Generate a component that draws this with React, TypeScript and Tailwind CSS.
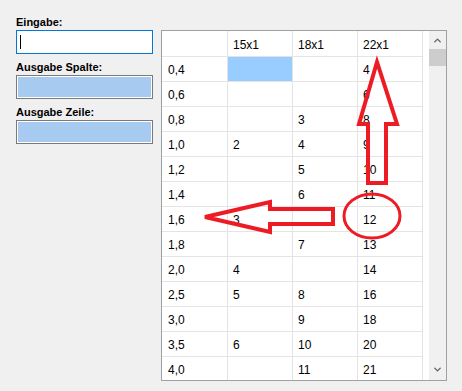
import { ChevronUp, ChevronDown } from "lucide-react";

const cols = ["15x1", "18x1", "22x1"];

const rows: [string, string, string, string][] = [
  ["0,4", "", "", "4"],
  ["0,6", "", "", "6"],
  ["0,8", "", "3", "8"],
  ["1,0", "2", "4", "9"],
  ["1,2", "", "5", "10"],
  ["1,4", "", "6", "11"],
  ["1,6", "3", "", "12"],
  ["1,8", "", "7", "13"],
  ["2,0", "4", "", "14"],
  ["2,5", "5", "8", "16"],
  ["3,0", "", "9", "18"],
  ["3,5", "6", "10", "20"],
  ["4,0", "", "11", "21"],
];

const Label = ({ text }: { text: string }) => (
  <div className="h-[15px] text-[11px] leading-[15px] font-bold text-black">
    {text}
  </div>
);

const OutputBox = () => (
  <div className="h-[24px] w-[137px] border border-[#7a7a7a] p-px bg-white">
    <div className="h-full w-full bg-[#a6caf0]" />
  </div>
);

export default function App() {
  return (
    <div
      className="relative w-[462px] h-[391px] bg-[#f0f0f0] overflow-hidden"
      style={{ fontFamily: '"Liberation Sans", Arial, sans-serif' }}
    >
      <div className="flex items-start">
        {/* form fields */}
        <div className="ml-[16px] mt-[15px] w-[137px] flex flex-col">
          <Label text="Eingabe:" />
          <div className="h-[24px] w-[137px] border border-[#0078d7] bg-white flex items-center pl-[3px]">
            <div className="w-px h-[14px] bg-black" />
          </div>
          <div className="mt-[6px]">
            <Label text="Ausgabe Spalte:" />
          </div>
          <OutputBox />
          <div className="mt-[6px]">
            <Label text="Ausgabe Zeile:" />
          </div>
          <OutputBox />
        </div>

        {/* grid */}
        <div className="ml-[8px] mt-[30px] w-[286px] h-[351px] border border-[#a0a0a0] bg-white flex overflow-hidden">
          <div className="w-[261px] flex flex-col text-[12px] text-black">
            <div className="flex h-[26px] shrink-0">
              <div className="w-[66px] border-r border-b border-[#e4e4e4]" />
              {cols.map((c) => (
                <div
                  key={c}
                  className="w-[65px] border-r border-b border-[#e4e4e4] flex items-center pl-[5px] pt-[2px]"
                >
                  {c}
                </div>
              ))}
            </div>
            {rows.map((r, i) => (
              <div key={r[0]} className="flex h-[25px] shrink-0">
                {r.map((v, j) => (
                  <div
                    key={j}
                    className={
                      (j === 0 ? "w-[66px] pl-[6px] " : "w-[65px] pl-[5px] ") +
                      "border-r border-b border-[#e4e4e4] flex items-center pt-px " +
                      (i === 0 && j === 1 ? "bg-[#99ccff]" : "")
                    }
                  >
                    {v}
                  </div>
                ))}
              </div>
            ))}
          </div>
          <div className="w-[6px]" />
          <div className="w-[17px] bg-[#f0f0f0] flex flex-col items-center">
            <div className="h-[18px] flex items-center justify-center text-[#606060]">
              <ChevronUp size={11} strokeWidth={3} />
            </div>
            <div className="w-[17px] h-[17px] bg-[#cdcdcd]" />
            <div className="flex-1" />
            <div className="h-[18px] mb-[2px] flex items-center justify-center text-[#606060]">
              <ChevronDown size={11} strokeWidth={3} />
            </div>
          </div>
        </div>
      </div>

      {/* red annotations */}
      <svg
        className="absolute inset-0 pointer-events-none"
        width={462}
        height={391}
        viewBox="0 0 462 391"
      >
        <polygon
          points="377,62 397,124 386,124 386,183 368,183 368,124 359,124"
          fill="none"
          stroke="#ed1c24"
          strokeWidth={4}
          strokeLinejoin="miter"
        />
        <polygon
          points="205,217 270,202 270,209 333,209 333,224 270,224 270,232"
          fill="none"
          stroke="#ed1c24"
          strokeWidth={4}
        />
        <ellipse
          cx={372}
          cy={216}
          rx={28}
          ry={22}
          fill="none"
          stroke="#ed1c24"
          strokeWidth={3}
        />
      </svg>
    </div>
  );
}
